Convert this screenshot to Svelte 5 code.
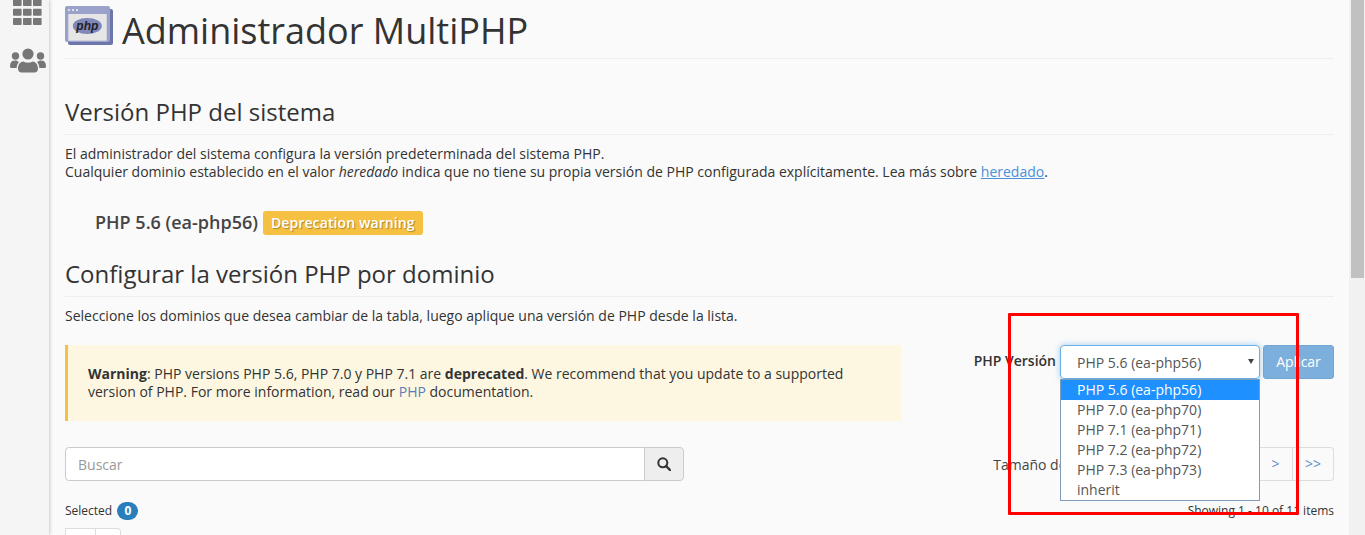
<script>
  const versions = ['PHP 5.6 (ea-php56)', 'PHP 7.0 (ea-php70)', 'PHP 7.1 (ea-php71)', 'PHP 7.2 (ea-php72)', 'PHP 7.3 (ea-php73)', 'inherit']
  const rows = [-1, 8.700, 18]
  const cols = [0, 10, 20]
  let selected = versions[0]
</script>

<div class="page">
  <aside class="sidebar">
    <svg class="apps" width="29" height="26" viewBox="0 0 29 26">
      <g fill="#777">
        {#each rows as y}
          {#each cols as x}
            <rect {x} {y} width="8.600" height="7" rx=".8" />
          {/each}
        {/each}
      </g>
    </svg>
    <svg class="users" width="36" height="26" viewBox="0 0 36 26">
      <g fill="#777">
        <circle cx="18" cy="6" r="5.600" />
        <circle cx="5.500" cy="8" r="3.700" />
        <circle cx="30.500" cy="8" r="3.700" />
        <path d="M0 18.500c0-4 1.500-6 4.500-6 2 0 3.300 .6 4.500 1.500-1.500 1.500-2.300 3.500-2.300 6H2c-1 0-2-.5-2-1.500z" />
        <path d="M36 18.500c0-4-1.500-6-4.500-6-2 0-3.300 .6-4.500 1.500 1.500 1.500 2.300 3.500 2.300 6H34c1 0 2-.5 2-1.500z" />
        <path d="M8 20.500c0-4 2.500-7 5.500-7 1.300 .8 3 1.200 4.500 1.200s3.200-.4 4.500-1.200c3 0 5.500 3 5.500 7 0 2.500-1.500 4-3.500 4h-13C9.500 24.500 8 23 8 20.500z" />
      </g>
    </svg>
  </aside>

  <main class="content">
    <header class="title">
      <svg class="php-icon" width="48" height="39" viewBox="0 0 48 39">
        <rect x="3" y="3" width="45" height="36" rx="2" fill="#6d76ab" />
        <rect x="0" y="0" width="45" height="36" rx="2" fill="#9aa1cb" />
        <rect x="3.300" y="8" width="38.400" height="26.700" fill="#e6e6e6" />
        <circle cx="4" cy="4" r="1.100" fill="#eeeef6" />
        <circle cx="8" cy="4" r="1.100" fill="#eeeef6" />
        <circle cx="12" cy="4" r="1.100" fill="#eeeef6" />
        <ellipse cx="22.300" cy="20" rx="14.500" ry="8" fill="#8087ba" />
        <text x="22.300" y="24" text-anchor="middle" class="php-text">php</text>
      </svg>
      <h1>Administrador MultiPHP</h1>
    </header>

    <h2 class="first">Versión PHP del sistema</h2>
    <p class="intro">
      El administrador del sistema configura la versión predeterminada del sistema PHP.<br />
      Cualquier dominio establecido en el valor <em>heredado</em> indica que no tiene su propia versión de PHP configurada explícitamente. Lea más sobre <a class="under" href="#top">heredado</a>.
    </p>
    <div class="current">
      <strong>PHP 5.6 (ea-php56)</strong>
      <span class="badge">Deprecation warning</span>
    </div>

    <h2>Configurar la versión PHP por dominio</h2>
    <p class="pick">Seleccione los dominios que desea cambiar de la tabla, luego aplique una versión de PHP desde la lista.</p>

    <div class="apply-row">
      <div class="alert">
        <b>Warning</b>: PHP versions PHP 5.6, PHP 7.0 y PHP 7.1 are <b>deprecated</b>. We recommend that you update to a supported version of PHP. For more information, read our <a href="#top">PHP</a> documentation.
      </div>
      <div class="version-form">
        <span class="version-label">PHP Versión</span>
        <div class="select-wrap">
          <div class="select">{selected}<i class="caret"></i></div>
          <ul class="options">
            {#each versions as v}
              <li class:active={v === selected}>{v}</li>
            {/each}
          </ul>
        </div>
        <button class="apply">Aplicar</button>
      </div>
    </div>

    <div class="search-row">
      <div class="search">
        <div class="search-input">Buscar</div>
        <button class="search-btn" aria-label="Buscar">
          <svg width="14" height="14" viewBox="0 0 14 14">
            <circle cx="5.800" cy="5.800" r="4.500" fill="none" stroke="#333" stroke-width="2" />
            <path d="M9 9l4 4" stroke="#333" stroke-width="2.400" stroke-linecap="round" />
          </svg>
        </button>
      </div>
      <div class="pager-side">
        <span class="size-label">Tamaño de página</span>
        <div class="pager">
          <span class="page-btn">&gt;</span>
          <span class="page-btn">&gt;&gt;</span>
        </div>
      </div>
    </div>

    <div class="meta-row">
      <div>Selected <span class="count">0</span></div>
      <div>Showing 1 - 10 of 11 items</div>
    </div>
    <div class="mini-btns"><span></span><span></span></div>
  </main>

  <div class="scrollbar"><div class="thumb"></div></div>
  <div class="highlight"></div>
</div>

<style>
  :global(body) {
    margin: 0;
    font-family: "Open Sans", sans-serif;
    color: #333;
  }
  .page {
    position: relative;
    display: flex;
    width: 1365px;
    height: 535px;
    overflow: hidden;
    background: #fafafa;
    font-size: 14px;
    line-height: 20px;
  }
  .sidebar {
    flex: 0 0 49px;
    box-sizing: border-box;
    padding-left: 6px;
    display: flex;
    flex-direction: column;
    align-items: center;
    background: #f5f5f5;
    box-shadow: 0 0 4px rgba(0, 0, 0, .3);
  }
  .users {
    margin-top: 22px;
  }
  .content {
    flex: 1;
    min-width: 0;
    padding: 0 15px 0 16px;
  }
  .title {
    display: flex;
    align-items: flex-start;
    gap: 9px;
    height: 59px;
    border-bottom: 1px solid #eee;
    padding-top: 6px;
    box-sizing: border-box;
  }
  .php-icon {
    flex: none;
  }
  .php-text {
    font-family: "Liberation Sans", sans-serif;
    font-size: 12px;
    font-style: italic;
    font-weight: 700;
    fill: #222;
  }
  h1 {
    margin: 0;
    font-size: 36px;
    font-weight: 400;
    line-height: 50px;
  }
  h2 {
    margin: 0;
    font-size: 24px;
    font-weight: 400;
    line-height: 36px;
    height: 40px;
    border-bottom: 1px solid #eee;
  }
  h2.first {
    margin-top: 35px;
  }
  .intro {
    margin: 10px 0 0;
    line-height: 18px;
  }
  a {
    color: #5c7cb8;
    text-decoration: none;
  }
  a.under {
    color: #4a90d9;
    text-decoration: underline;
  }
  .current {
    display: flex;
    align-items: center;
    gap: 5px;
    margin: 30px 0 0 30px;
    height: 24px;
  }
  .current strong {
    font-size: 18px;
    font-weight: 600;
    color: #444;
    margin-bottom: 2px;
  }
  .badge {
    background: #f6c142;
    color: #fff;
    font-weight: 600;
    font-size: 14px;
    letter-spacing: .1px;
    line-height: 24px;
    padding: 0 8px;
    border-radius: 3px;
    text-shadow: 1px 1px 1px rgba(0, 0, 0, .3);
  }
  .current + h2 {
    margin-top: 21px;
  }
  .pick {
    margin: 9px 0 0;
  }
  .apply-row {
    display: flex;
    justify-content: space-between;
    align-items: flex-start;
    margin-top: 19px;
  }
  .alert {
    box-sizing: border-box;
    width: 836px;
    height: 76px;
    padding: 20px 20px;
    background: #fdf7e2;
    border-left: 3px solid #f6c142;
    line-height: 18px;
  }
  .version-form {
    display: flex;
    align-items: flex-start;
    gap: 4px;
  }
  .version-label {
    font-weight: 600;
    margin-top: 6px;
  }
  .select-wrap {
    position: relative;
    width: 200px;
  }
  .select {
    position: relative;
    box-sizing: border-box;
    height: 34px;
    padding: 7px 16px;
    background: #fff;
    border: 1px solid #66afe9;
    border-radius: 4px;
    box-shadow: 0 0 6px rgba(102, 175, 233, .6);
    color: #555;
  }
  .caret {
    position: absolute;
    right: 5px;
    top: 13px;
    border: 3.500px solid transparent;
    border-top: 5px solid #444;
    border-bottom: 0;
  }
  .options {
    position: absolute;
    z-index: 2;
    top: 34px;
    left: 0;
    right: 0;
    box-sizing: border-box;
    margin: 0;
    padding: 0;
    list-style: none;
    background: #fff;
    border: 1px solid #7f9db9;
    color: #555;
  }
  .options li {
    padding-left: 16px;
    height: 20px;
    line-height: 20px;
  }
  .options li.active {
    background: #1e90ff;
    color: #fff;
  }
  .apply {
    box-sizing: border-box;
    width: 71px;
    height: 34px;
    padding: 0 0 2px;
    margin-left: -1px;
    background: #7dafdc;
    border: 1px solid #72a6d4;
    border-radius: 3px;
    color: #fff;
    font: 400 14px "Open Sans", sans-serif;
  }
  .search-row {
    display: flex;
    justify-content: space-between;
    align-items: center;
    margin-top: 26px;
  }
  .search {
    display: flex;
    width: 619px;
    height: 34px;
  }
  .search-input {
    flex: 1;
    box-sizing: border-box;
    padding: 7px 12px;
    background: #fff;
    border: 1px solid #ccc;
    border-radius: 4px 0 0 4px;
    color: #999;
  }
  .search-btn {
    flex: 0 0 40px;
    display: flex;
    align-items: center;
    justify-content: center;
    margin-left: -1px;
    padding: 0;
    background: #eee;
    border: 1px solid #ccc;
    border-radius: 0 4px 4px 0;
  }
  .pager-side {
    display: flex;
    align-items: center;
    gap: 4px;
  }
  .size-label {
    color: #444;
    margin-top: 2px;
  }
  .pager {
    display: flex;
    margin-left: 141px;
  }
  .page-btn {
    box-sizing: border-box;
    width: 34px;
    height: 34px;
    line-height: 32px;
    text-align: center;
    color: #5c8fc4;
    border: 1px solid #ddd;
    border-left: 0;
  }
  .page-btn:last-child {
    width: 41px;
    border-radius: 0 4px 4px 0;
  }
  .meta-row {
    display: flex;
    justify-content: space-between;
    align-items: center;
    margin-top: 20px;
    font-size: 12px;
    height: 20px;
  }
  .count {
    display: inline-block;
    min-width: 21px;
    box-sizing: border-box;
    margin-left: 2px;
    padding: 0 7px;
    background: #2a7fba;
    color: #fff;
    border-radius: 10px;
    font-weight: 700;
    line-height: 18px;
    text-align: center;
  }
  .mini-btns {
    display: flex;
    margin-top: 7px;
  }
  .mini-btns span {
    width: 31px;
    height: 30px;
    box-sizing: border-box;
    border: 1px solid #ddd;
    background: #fff;
  }
  .mini-btns span + span {
    width: 25px;
    border-left: 0;
    border-radius: 0 4px 0 0;
  }
  .scrollbar {
    flex: 0 0 16px;
    box-sizing: border-box;
    padding: 0 1px 0 2px;
    background: #f1f1f1;
  }
  .thumb {
    height: 278px;
    background: #c1c1c1;
  }
  .highlight {
    position: absolute;
    z-index: 3;
    left: 1008px;
    top: 313px;
    width: 291px;
    height: 202px;
    box-sizing: border-box;
    border: 3px solid #f00;
    border-radius: 1px;
    pointer-events: none;
  }
</style>
